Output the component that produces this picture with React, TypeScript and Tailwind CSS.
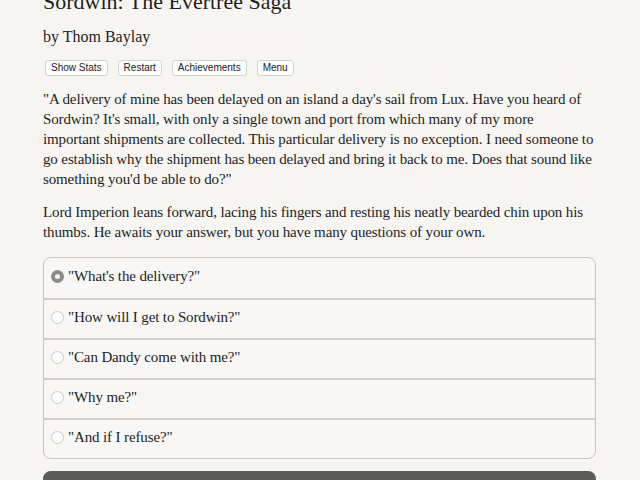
const intro = [
  '"A delivery of mine has been delayed on an island a day\'s sail from Lux. Have you heard of',
  "Sordwin? It's small, with only a single town and port from which many of my more",
  "important shipments are collected. This particular delivery is no exception. I need someone to",
  "go establish why the shipment has been delayed and bring it back to me. Does that sound like",
  "something you'd be able to do?\"",
];

const reaction = [
  "Lord Imperion leans forward, lacing his fingers and resting his neatly bearded chin upon his",
  "thumbs. He awaits your answer, but you have many questions of your own.",
];

const choices = [
  '"What\'s the delivery?"',
  '"How will I get to Sordwin?"',
  '"Can Dandy come with me?"',
  '"Why me?"',
  '"And if I refuse?"',
];

const buttons = ["Show Stats", "Restart", "Achievements", "Menu"];

function Radio({ checked }: { checked: boolean }) {
  if (checked) {
    return (
      <span className="flex h-[13px] w-[13px] shrink-0 items-center justify-center rounded-full bg-[#8c8b89]">
        <span className="h-[5px] w-[5px] rounded-full bg-[#f4f3f1]" />
      </span>
    );
  }
  return <span className="h-[13px] w-[13px] shrink-0 rounded-full border border-[#c9c7c3] bg-white" />;
}

export default function App() {
  return (
    <div
      className="h-[480px] overflow-hidden bg-[#f7f5f2] pl-[43px] pr-[44px] text-[#1e1e1e]"
      style={{ fontFamily: '"Liberation Serif", serif' }}
    >
      <h1 className="-mt-[14px] text-[22px] leading-[32px] font-normal">Sordwin: The Evertree Saga</h1>
      <p className="mt-[7px] text-[16px] leading-[24px]">by Thom Baylay</p>

      <div className="mt-[11px] flex gap-[10px] pl-[2px]">
        {buttons.map((b) => (
          <button
            key={b}
            className="h-[16px] rounded-[3px] border border-[#d4d2cf] bg-[#fdfdfc] px-[5px] text-[10px] leading-[14px] text-[#222]"
            style={{ fontFamily: '"Liberation Sans", Arial, sans-serif' }}
          >
            {b}
          </button>
        ))}
      </div>

      <div className="mt-[13px] text-[15px] leading-[20px] tracking-[-0.13px] whitespace-nowrap">
        {intro.map((l) => (
          <div key={l}>{l}</div>
        ))}
      </div>

      <div className="mt-[13px] text-[15px] leading-[20px] tracking-[-0.13px] whitespace-nowrap">
        {reaction.map((l) => (
          <div key={l}>{l}</div>
        ))}
      </div>

      <div className="mt-[15px] overflow-hidden rounded-[8px] border border-[#c9c6c1] bg-[#f8f7f5]">
        {choices.map((c, i) => (
          <div
            key={c}
            className={`flex h-[40px] items-center gap-[4px] pb-[3px] pl-[7px] text-[15px] tracking-[-0.13px] ${i > 0 ? "border-t-2 border-[#d3d0cc]" : ""}`}
          >
            <Radio checked={i === 0} />
            <span>{c}</span>
          </div>
        ))}
      </div>

      <div className="mt-[12px] h-[40px] rounded-[8px] bg-[#5c5c5b]" />
    </div>
  );
}
